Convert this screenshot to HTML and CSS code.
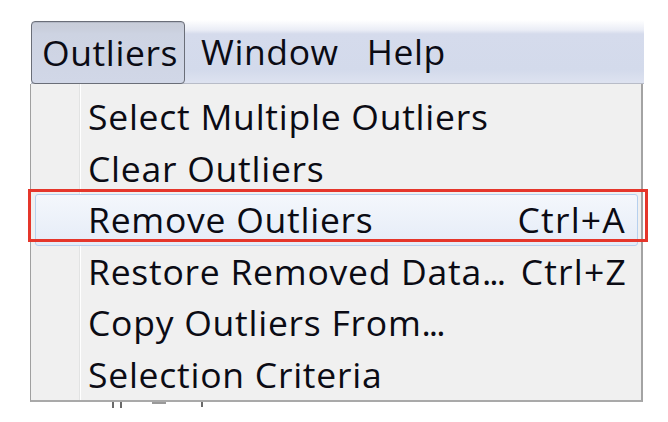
FILE: index.html
```html
<!DOCTYPE html>
<html>
<head>
<meta charset="utf-8">
<link rel="stylesheet" href="styles.css">
</head>
<body>
<div class="stage">
  <div class="menubar">
    <div class="mb-item active">Outliers</div>
    <div class="mb-item window">Window</div>
    <div class="mb-item help">Help</div>
  </div>
  <div class="dropdown">
    <div class="gutter"></div>
    <div class="items">
      <div class="row"><span class="label">Select Multiple Outliers</span></div>
      <div class="row"><span class="label">Clear Outliers</span></div>
      <div class="row hot"><span class="label">Remove Outliers</span><span class="key">Ctrl+A</span></div>
      <div class="row"><span class="label">Restore Removed Data<span class="dots">...</span></span><span class="key">Ctrl+Z</span></div>
      <div class="row"><span class="label">Copy Outliers From<span class="dots">...</span></span></div>
      <div class="row"><span class="label">Selection Criteria</span></div>
    </div>
    <div class="annot"></div>
  </div>
  <div class="under">
    <i class="frag f1"></i><i class="frag f2"></i><i class="frag f3"></i><i class="frag f4"></i>
  </div>
</div>
</body>
</html>
```
FILE: styles.css
```css
html, body {
  margin: 0;
  padding: 0;
  background: #ffffff;
}
body {
  font-family: "Open Sans", "Noto Sans", "DejaVu Sans", sans-serif;
  color: #0b0b14;
}
.stage {
  padding: 20px 0 0 30px;
  width: 614px;
}
.menubar {
  height: 63px;
  margin-left: 1px;
  display: flex;
  align-items: stretch;
  background: linear-gradient(to bottom, #ffffff 0px, #eaedf6 10px, #d5dbec 14px, #d3daeb 50px, #dde2f0 62px);
  border-bottom: 1px solid #b8bcc8;
  font-size: 35.5px;
  letter-spacing: 0.6px;
}
.mb-item {
  display: flex;
  align-items: center;
  padding-bottom: 2px;
  box-sizing: border-box;
}
.mb-item.active {
  width: 154px;
  margin-top: 1px;
  padding-left: 10px;
  border: 1px solid #6a6e78;
  border-radius: 4px;
  background: linear-gradient(to bottom, #c8cdd8 0px, #c9cedb 6px, #cdd3e2 12px, #d1d7e7 60px);
  box-shadow: inset 0 1px 0 #b4b9c6;
  margin-bottom: -1px;
}
.mb-item.window {
  margin-left: 16px;
}
.mb-item.help {
  margin-left: 28px;
}
.dropdown {
  position: relative;
  display: flex;
  width: 613px;
  background: #f0f0f0;
  border-left: 1px solid #a0a0a0;
  border-right: 2px solid #a3a3a3;
  border-bottom: 2px solid #a9a9a9;
  box-sizing: border-box;
  height: 318px;
}
.gutter {
  width: 48px;
  flex: none;
  border-right: 1px solid #e2e3e3;
  box-shadow: 1px 0 0 #ffffff;
}
.items {
  flex: 1;
  padding-top: 7px;
  margin-left: -45px;
}
.row {
  height: 51.5px;
  display: flex;
  align-items: center;
  font-size: 35.5px;
  letter-spacing: 0.75px;
  padding-left: 53px;
  padding-right: 14px;
  box-sizing: border-box;
  line-height: 1;
}
.row .label {
  flex: 1;
  white-space: nowrap;
}
.row .dots {
  letter-spacing: -2px;
}
.row .key {
  white-space: nowrap;
  letter-spacing: 1.2px;
}
.row.hot {
  border: 1px solid #b6d0ee;
  border-radius: 3px;
  background: linear-gradient(to bottom, #f4f7fc, #e5ecf7);
  margin-right: 3px;
  padding-left: 52px;
  padding-right: 11px;
}
.annot {
  position: absolute;
  left: -3px;
  top: 105px;
  width: 614px;
  height: 47px;
  border: 3px solid #e5362b;
}
.under {
  height: 10px;
  display: flex;
  align-items: flex-start;
  padding-left: 49px;
}
.frag {
  display: block;
  background: #6a6a6a;
  height: 6px;
}
.f1 { width: 2px; margin-left: 33px; }
.f2 { width: 2px; margin-left: 6px; }
.f3 { width: 14px; height: 2px; margin-left: 30px; background: #9a9a9a; }
.f4 { width: 2px; margin-left: 35px; height: 5px; }
```
